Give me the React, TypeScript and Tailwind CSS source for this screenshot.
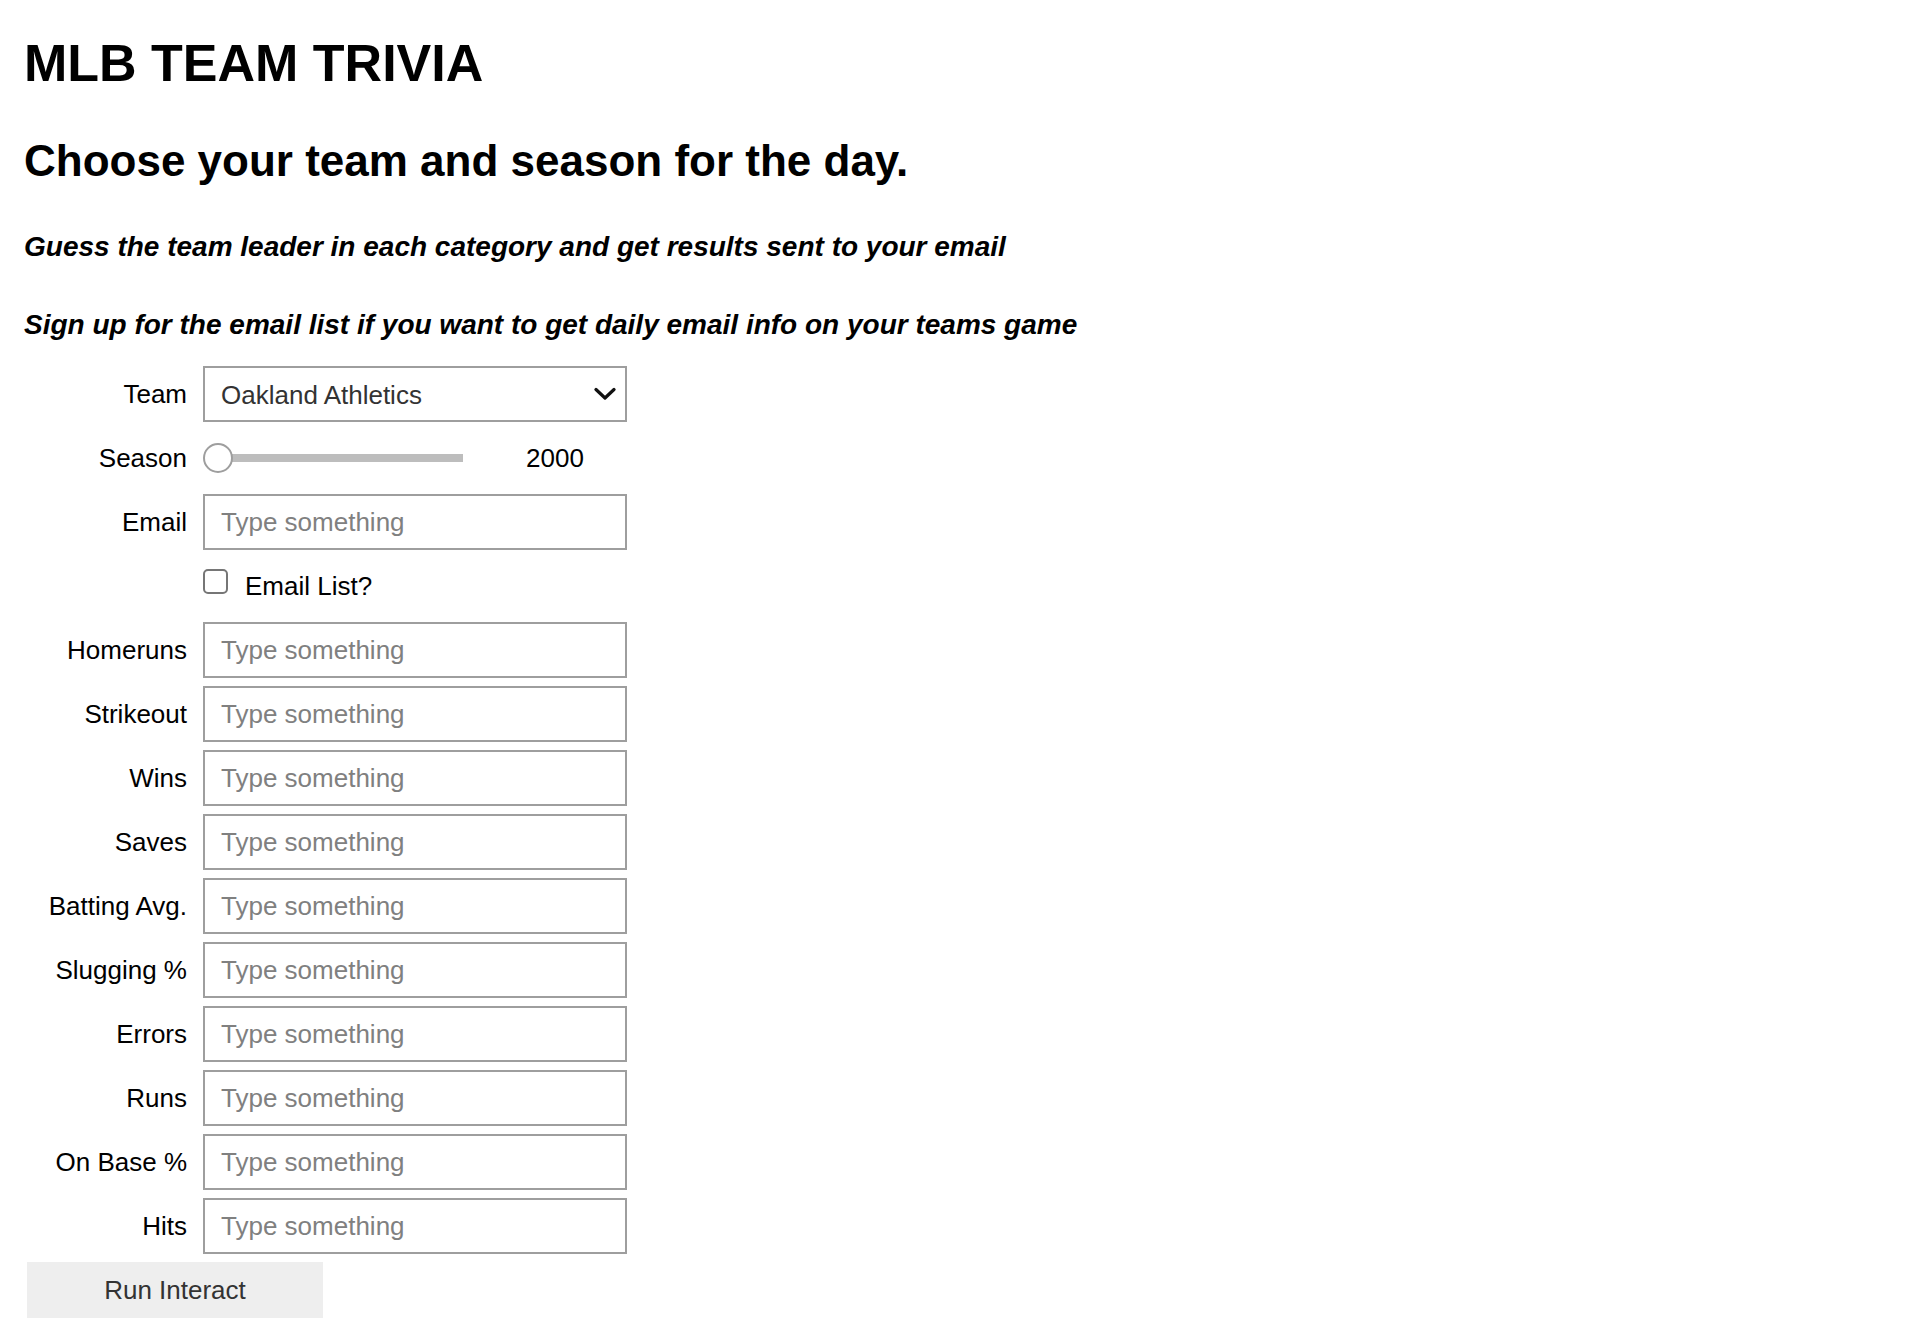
import React from 'react';

const statFields = [
  'Homeruns',
  'Strikeout',
  'Wins',
  'Saves',
  'Batting Avg.',
  'Slugging %',
  'Errors',
  'Runs',
  'On Base %',
  'Hits',
];

const Label: React.FC<{ text?: string }> = ({ text }) => (
  <span className="w-[160px] ml-[4px] mr-[16px] shrink-0 text-right text-[26px] text-black whitespace-nowrap">
    {text}
  </span>
);

const TextRow: React.FC<{ label: string }> = ({ label }) => (
  <div className="flex items-center h-[56px]">
    <Label text={label} />
    <input
      type="text"
      placeholder="Type something"
      className="w-[424px] h-[56px] border-2 border-[#9e9e9e] bg-white pl-[16px] pr-[8px] text-[26px] text-[#333] placeholder:text-[#808080] outline-none"
    />
  </div>
);

const App: React.FC = () => {
  return (
    <div className="min-h-screen bg-white pl-[23px] pt-[33px] font-['Liberation_Sans',Arial,sans-serif] text-black">
      {/* Headings */}
      <div className="pl-[1px]">
        <h1 className="text-[52px] leading-[60px] font-bold">MLB TEAM TRIVIA</h1>
        <h2 className="mt-[42px] text-[44px] leading-[52px] font-bold">Choose your team and season for the day.</h2>
        <h4 className="mt-[43px] text-[28px] leading-[34px] font-bold italic">
          Guess the team leader in each category and get results sent to your email
        </h4>
        <h4 className="mt-[44px] text-[28px] leading-[34px] font-bold italic">
          Sign up for the email list if you want to get daily email info on your teams game
        </h4>
      </div>

      {/* Widget form */}
      <div className="mt-[20px] pt-[4px] flex flex-col gap-[8px]">
        <div className="flex items-center h-[56px]">
          <Label text="Team" />
          <div className="w-[424px] h-[56px] border-2 border-[#9e9e9e] bg-white pl-[16px] pr-[9px] flex items-center justify-between">
            <span className="text-[26px] text-[#333] mt-[2px]">Oakland Athletics</span>
            <svg width="22" height="14" viewBox="0 0 22 14" fill="none">
              <path d="M2 2.5 L11 11 L20 2.5" stroke="#111" strokeWidth="3.2" strokeLinecap="round" strokeLinejoin="round" />
            </svg>
          </div>
        </div>

        <div className="flex items-center h-[56px]">
          <Label text="Season" />
          <div className="relative w-[260px] h-[56px] flex items-center">
            <div className="absolute left-[15px] right-0 h-[8px] bg-[#bdbdbd]" />
            <div className="absolute left-0 w-[30px] h-[30px] rounded-full border-2 border-[#9e9e9e] bg-white" />
          </div>
          <span className="ml-[63px] text-[26px]">2000</span>
        </div>

        <TextRow label="Email" />

        <div className="flex items-center h-[56px]">
          <Label />
          <div className="w-[25px] h-[25px] mb-[9px] rounded-[5px] border-2 border-[#767676] bg-white" />
          <span className="ml-[17px] text-[26px]">Email List?</span>
        </div>

        {statFields.map((f) => (
          <TextRow key={f} label={f} />
        ))}

        <button className="ml-[4px] w-[296px] h-[56px] bg-[#eeeeee] text-[26px] text-[#333]">Run Interact</button>
      </div>
    </div>
  );
};

export default App;
